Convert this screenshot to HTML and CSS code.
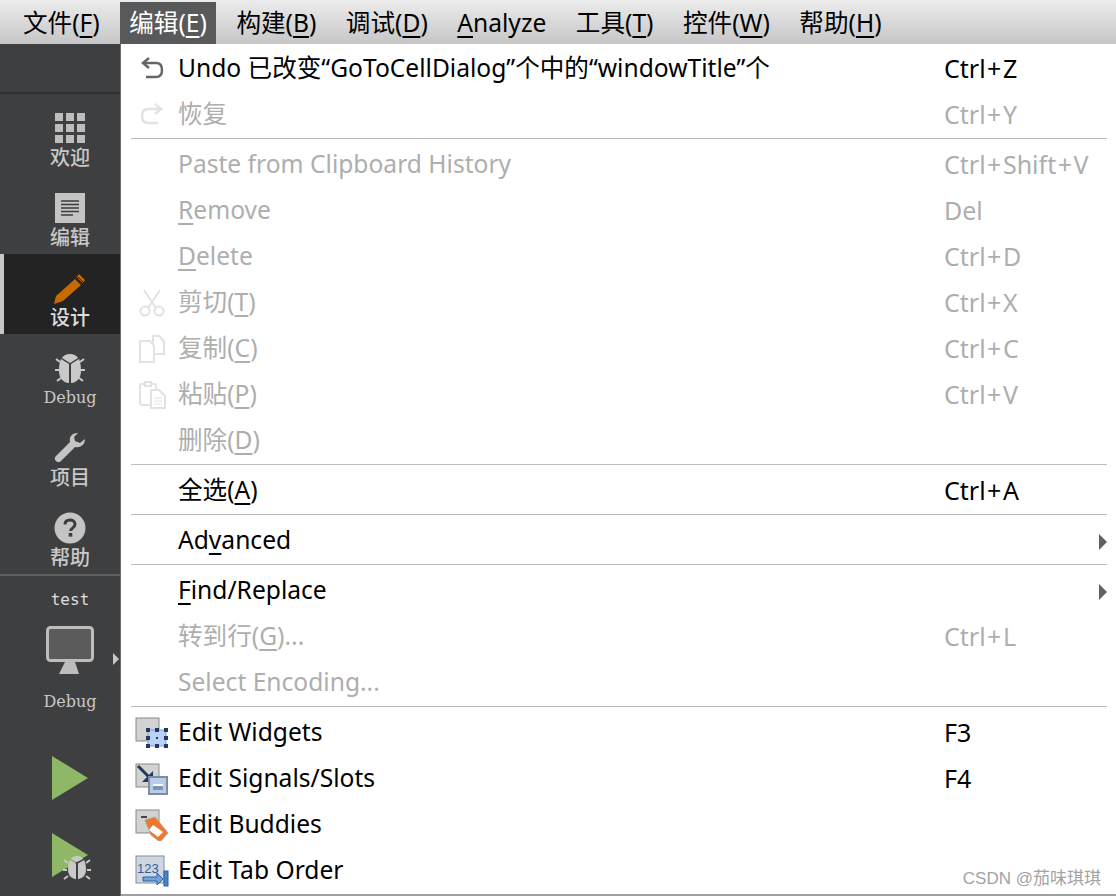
FILE: index.html
```html
<!DOCTYPE html>
<html lang="en">
<head>
  <meta charset="UTF-8" />
  <title>Qt Creator - Edit menu</title>
  <link rel="stylesheet" href="styles.css">
</head>
<body>
  <div class="menubar">
    <span class="top-item">文件(<u>F</u>)</span>
    <span class="top-item active">编辑(<u>E</u>)</span>
    <span class="top-item">构建(<u>B</u>)</span>
    <span class="top-item">调试(<u>D</u>)</span>
    <span class="top-item"><u>A</u>nalyze</span>
    <span class="top-item">工具(<u>T</u>)</span>
    <span class="top-item">控件(<u>W</u>)</span>
    <span class="top-item">帮助(<u>H</u>)</span>
  </div>
  <div class="main">
    <!-- Left mode bar -->
    <div class="sidebar">
      <div class="side-top"></div>
      <div class="mode">
        <svg class="mode-icon" width="32" height="32" viewBox="0 0 32 32"><g fill="#bdbdbd"><rect x="1" y="1" width="8" height="8"/><rect x="12" y="1" width="8" height="8"/><rect x="23" y="1" width="8" height="8"/><rect x="1" y="12" width="8" height="8"/><rect x="12" y="12" width="8" height="8"/><rect x="23" y="12" width="8" height="8"/><rect x="1" y="23" width="8" height="8"/><rect x="12" y="23" width="8" height="8"/><rect x="23" y="23" width="8" height="8"/></g></svg>
        <span>欢迎</span>
      </div>
      <div class="mode">
        <svg class="mode-icon" width="32" height="32" viewBox="0 0 32 32"><rect x="1" y="1" width="30" height="30" fill="#c4c4c4"/><path d="M7 9h18M7 12.500h18M7 16h18M7 19.500h18M7 23h12" stroke="#3c3c3c" stroke-width="1.400"/></svg>
        <span>编辑</span>
      </div>
      <div class="mode mode-active">
        <svg class="mode-icon" width="32" height="32" viewBox="0 0 32 32"><path d="M25 2l6 6-2.500 3-6-6zM21 7l6 6L9 29 0 32l2-8z" fill="#c66a00"/><path d="M23.500 4.500l5.500 5.500" stroke="#222" stroke-width="1"/></svg>
        <span>设计</span>
      </div>
      <div class="mode">
        <svg class="mode-icon" width="32" height="32" viewBox="0 0 32 32"><path d="M6 10L2 7M26 10l4-3M5 18H1M27 18h4M7 26l-4 3M25 26l4 3" stroke="#c9c9c9" stroke-width="2"/><path d="M16 2c4 0 7 2 8 4l-8 5-8-5c1-2 4-4 8-4zM7 7l8 5v19c-6-.5-10-5-10-12 0-4 .5-9 2-12zM25 7l-8 5v19c6-.5 10-5 10-12 0-4-.5-9-2-12z" fill="#c9c9c9"/></svg>
        <span class="latin">Debug</span>
      </div>
      <div class="mode">
        <svg class="mode-icon" width="32" height="32" viewBox="0 0 32 32"><path d="M23 1c-5 0-8 4-7 9L2 24c-2 2-1 4 0 5s3 2 5 0l14-14c5 1 10-2 10-8l-5 4-5-2-1-4 4-4z" fill="#c4c4c4"/></svg>
        <span>项目</span>
      </div>
      <div class="mode">
        <svg class="mode-icon" width="32" height="32" viewBox="0 0 32 32"><circle cx="16" cy="16" r="15.500" fill="#c4c4c4"/><path d="M11 12.500c0-3 2.200-4.500 5-4.500s5 1.600 5 4.300c0 3.700-4.300 3.400-4.300 6.700" fill="none" stroke="#3c3c3c" stroke-width="3"/><rect x="14.700" y="21" width="3.600" height="3.600" fill="#3c3c3c"/></svg>
        <span>帮助</span>
      </div>
      <div class="kit">
        <span class="kit-name">test</span>
        <svg class="kit-monitor" width="48" height="48" viewBox="0 0 48 48"><rect x="1.500" y="1.500" width="45" height="33" rx="3" fill="#5a5b5a" stroke="#bdbdbd" stroke-width="3"/><path d="M19 36h10l4 12H13z" fill="#bdbdbd"/></svg>
        <span class="latin">Debug</span>
        <span class="kit-arrow"></span>
      </div>
      <div class="run">
        <svg width="36" height="44" viewBox="0 0 36 44"><path d="M0 0l36 22L0 44z" fill="#8fb866"/></svg>
      </div>
      <div class="run">
        <svg class="run-debug" width="40" height="48" viewBox="0 0 40 48"><path d="M0 0l36 22L0 44z" fill="#8fb866"/><path d="M16 30l-4-3M34 30l4-3M15 37h-4M35 37h4M16 43l-4 3M34 43l4 3" stroke="#c9c9c9" stroke-width="2"/><path d="M25 23c3 0 5 1 6 3l-6 3-6-3c1-2 3-3 6-3zM18 27l6 3.500V46c-5-.5-8-4-8-9.500 0-3 .7-7 2-9.500zM32 27l-6 3.500V46c5-.5 8-4 8-9.500 0-3-.7-7-2-9.500z" fill="#c9c9c9"/></svg>
      </div>
    </div>

    <!-- Edit menu -->
    <div class="menu">
      <div class="row">
        <span class="icon"><svg width="24" height="24" viewBox="0 0 24 24"><path d="M3 6h13c4 0 6 3 6 7s-2 7-6 7H6" fill="none" stroke="#666" stroke-width="2.500"/><path d="M9 1L3 6l6 5" fill="none" stroke="#666" stroke-width="2.500"/></svg></span>
        <span class="label">Undo 已改变“GoToCellDialog”个中的“windowTitle”个</span>
        <span class="key">Ctrl<span class="plus">+</span>Z</span>
      </div>
      <div class="row off">
        <span class="icon"><svg width="24" height="24" viewBox="0 0 24 24"><path d="M21 6H8c-4 0-6 3-6 7s2 7 6 7h10" fill="none" stroke="#e2e2e2" stroke-width="2.500"/><path d="M15 1l6 5-6 5" fill="none" stroke="#e2e2e2" stroke-width="2.500"/></svg></span>
        <span class="label">恢复</span>
        <span class="key">Ctrl<span class="plus">+</span>Y</span>
      </div>
      <div class="sep"></div>
      <div class="row off">
        <span class="icon"></span>
        <span class="label">Paste from Clipboard History</span>
        <span class="key">Ctrl<span class="plus">+</span>Shift<span class="plus">+</span>V</span>
      </div>
      <div class="row off">
        <span class="icon"></span>
        <span class="label"><u>R</u>emove</span>
        <span class="key">Del</span>
      </div>
      <div class="row off">
        <span class="icon"></span>
        <span class="label"><u>D</u>elete</span>
        <span class="key">Ctrl<span class="plus">+</span>D</span>
      </div>
      <div class="row off">
        <span class="icon"><svg width="26" height="28" viewBox="0 0 26 28"><g fill="none" stroke="#e2e2e2" stroke-width="2"><path d="M5 1l12 18M21 1L9 19"/><circle cx="6" cy="22" r="4.500"/><circle cx="20" cy="22" r="4.500"/></g></svg></span>
        <span class="label">剪切(<u>T</u>)</span>
        <span class="key">Ctrl<span class="plus">+</span>X</span>
      </div>
      <div class="row off">
        <span class="icon"><svg width="28" height="28" viewBox="0 0 28 28"><g fill="#fff" stroke="#e2e2e2" stroke-width="2"><path d="M15 1h6l5 5v13H15z"/><path d="M2 6h10l4 5v16H2z"/></g></svg></span>
        <span class="label">复制(<u>C</u>)</span>
        <span class="key">Ctrl<span class="plus">+</span>C</span>
      </div>
      <div class="row off">
        <span class="icon"><svg width="28" height="28" viewBox="0 0 28 28"><g fill="#fff" stroke="#e2e2e2" stroke-width="2"><rect x="2" y="3" width="16" height="21" rx="2"/><rect x="7" y="1" width="6" height="4"/><path d="M13 9h8l6 6v12H13z"/><path d="M16 17h8M16 20h8M16 23h8" stroke-width="1"/></g></svg></span>
        <span class="label">粘贴(<u>P</u>)</span>
        <span class="key">Ctrl<span class="plus">+</span>V</span>
      </div>
      <div class="row off">
        <span class="icon"></span>
        <span class="label">删除(<u>D</u>)</span>
        <span class="key"></span>
      </div>
      <div class="sep"></div>
      <div class="row">
        <span class="icon"></span>
        <span class="label">全选(<u>A</u>)</span>
        <span class="key">Ctrl<span class="plus">+</span>A</span>
      </div>
      <div class="sep"></div>
      <div class="row">
        <span class="icon"></span>
        <span class="label">Ad<u>v</u>anced</span>
        <span class="key"></span>
        <span class="sub-arrow"></span>
      </div>
      <div class="sep"></div>
      <div class="row">
        <span class="icon"></span>
        <span class="label"><u>F</u>ind/Replace</span>
        <span class="key"></span>
        <span class="sub-arrow"></span>
      </div>
      <div class="row off">
        <span class="icon"></span>
        <span class="label">转到行(<u>G</u>)...</span>
        <span class="key">Ctrl<span class="plus">+</span>L</span>
      </div>
      <div class="row off">
        <span class="icon"></span>
        <span class="label">Select Encoding...</span>
        <span class="key"></span>
      </div>
      <div class="sep"></div>
      <div class="row">
        <span class="icon"><svg width="34" height="32" viewBox="0 0 34 32"><rect x="1" y="1" width="23" height="23" fill="#d2d2d2" stroke="#8a8a8a"/><rect x="13" y="13" width="18" height="16" fill="#b9d0f7" stroke="#7f9ccc"/><g fill="#24385c"><rect x="11" y="11" width="4" height="4"/><rect x="20" y="11" width="4" height="4"/><rect x="29" y="11" width="4" height="4"/><rect x="11" y="19" width="4" height="4"/><rect x="21" y="20" width="2" height="2"/><rect x="29" y="19" width="4" height="4"/><rect x="11" y="27" width="4" height="4"/><rect x="20" y="27" width="4" height="4"/><rect x="29" y="27" width="4" height="4"/></g></svg></span>
        <span class="label">Edit Widgets</span>
        <span class="key">F3</span>
      </div>
      <div class="row">
        <span class="icon"><svg width="34" height="32" viewBox="0 0 34 32"><rect x="1" y="1" width="23" height="23" fill="#d2d2d2" stroke="#8a8a8a"/><path d="M3 3l13 13" stroke="#24385c" stroke-width="3"/><path d="M18 8v11H7z" fill="#24385c"/><rect x="14" y="14" width="18" height="17" fill="#b9cde8" stroke="#7d8ca3" stroke-width="2"/><rect x="18" y="21" width="10" height="2" fill="#fff"/><rect x="18" y="23" width="10" height="4" fill="#7d95bb"/></svg></span>
        <span class="label">Edit Signals/Slots</span>
        <span class="key">F4</span>
      </div>
      <div class="row">
        <span class="icon"><svg width="34" height="32" viewBox="0 0 34 32"><rect x="1" y="1" width="23" height="23" fill="#d2d2d2" stroke="#8a8a8a"/><path d="M6 8h6" stroke="#444" stroke-width="2"/><path d="M10 11l10-3 13 16-8 9-9-7z" fill="#f1772f" stroke="#b7a48f" stroke-width="1"/><path d="M18 16l10 7-5 5-9-7z" fill="#fff"/></svg></span>
        <span class="label">Edit Buddies</span>
        <span class="key"></span>
      </div>
      <div class="row">
        <span class="icon"><svg width="34" height="32" viewBox="0 0 34 32"><rect x="1" y="1" width="28" height="27" fill="#d0d6dd" stroke="#7f8ea3"/><text x="2" y="18" class="tab-num">123</text><path d="M8 22h14v-4l6 6-6 6v-4H8z" fill="#6fa4e0" stroke="#2f5f9f"/><rect x="29" y="16" width="4" height="15" fill="#4c83c8" stroke="#2f5f9f"/></svg></span>
        <span class="label">Edit Tab Order</span>
        <span class="key"></span>
      </div>
      <span class="watermark">CSDN @茄味琪琪</span>
    </div>
  </div>
</body>
</html>
```

FILE: styles.css
```css
html, body { margin: 0; height: 896px; overflow: hidden; background: #fff; }
body { font-family: "Noto Sans", "Noto Sans CJK SC", sans-serif; font-size: 24.6px; color: #000; }
u { text-underline-offset: 4px; text-decoration-thickness: 2px; }

/* Menu bar */
.menubar { height: 44px; display: flex; align-items: flex-end; gap: 11.5px; padding-left: 14px; background: linear-gradient(#ececec, #c6c6c6); }
.top-item { height: 42px; line-height: 42px; padding: 0 9px; white-space: nowrap; }
.top-item.active { background: #58595b; color: #fff; }

.main { display: flex; height: 852px; }

/* Mode bar */
.sidebar { width: 120px; flex: none; background: #3e3f41; color: #c8c8c8; font-size: 20px; font-weight: 500; border-right: 1px solid #6d6d6d; }
.side-top { height: 48px; border-bottom: 2px solid #2f3031; }
.mode { height: 80px; box-sizing: border-box; padding-left: 20px; display: flex; flex-direction: column; align-items: center; justify-content: flex-end; }
.mode span { height: 26px; line-height: 24px; margin-bottom: 2px; }
.mode-icon { display: block; margin-bottom: 2px; }
.mode-active { background: #222322; border-left: 4px solid #c8c8c8; padding-left: 16px; color: #ddd; }
.latin { font-family: "DejaVu Serif", serif; font-size: 16px; font-weight: 400; }
.kit { position: relative; height: 165px; box-sizing: border-box; padding-left: 20px; border-top: 2px solid #5e5f60; display: flex; flex-direction: column; align-items: center; }
.kit-name { font-family: "DejaVu Sans Mono", monospace; font-size: 16px; font-weight: 400; color: #ddd; line-height: 20px; margin-top: 14px; }
.kit-monitor { margin: 16px 0 18px; display: block; }
.kit .latin { line-height: 20px; }
.kit-arrow { position: absolute; left: 113px; top: 77px; border-left: 6px solid #c8c8c8; border-top: 6px solid transparent; border-bottom: 6px solid transparent; }
.run { height: 77px; display: flex; align-items: center; padding-left: 52px; }
.run-debug { margin-top: 4px; overflow: visible; }

/* Edit menu */
.menu { position: relative; flex: 1; padding: 2px 9px 0 10px; border-bottom: 2px solid #a0a0a0; height: 848px; }
.row { height: 46px; display: flex; align-items: center; line-height: 46px; white-space: nowrap; position: relative; }
.off { color: #aeaeae; }
.icon { width: 47px; flex: none; display: flex; align-items: center; justify-content: center; padding-right: 6px; box-sizing: border-box; }
.icon svg { display: block; }
.label { width: 766px; flex: none; margin-top: -2px; }
.key { flex: 1; margin-top: -2px; font-size: 25px; }
.plus { margin: 0 1.500px; }
.sub-arrow { position: absolute; right: 0; top: 16px; border-left: 8px solid #606060; border-top: 8px solid transparent; border-bottom: 8px solid transparent; }
.sep { height: 1px; margin-bottom: 3px; background: #bdbdbd; }
.tab-num { font-family: "Liberation Sans", sans-serif; font-size: 13px; fill: #2f5f9f; }
.watermark { position: absolute; right: 15px; bottom: 5px; font-family: "Liberation Sans", "Noto Sans CJK SC", sans-serif; font-size: 17px; color: #a3a3a3; }
```
